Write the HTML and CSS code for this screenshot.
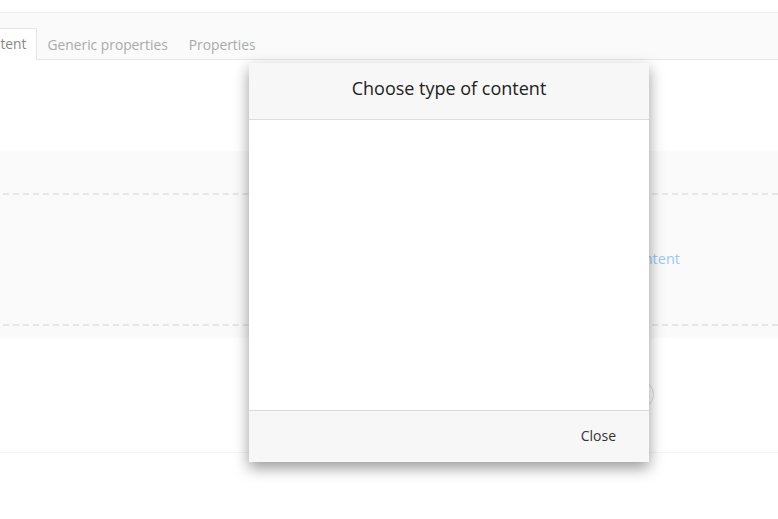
FILE: index.html
```html
<!DOCTYPE html>
<html lang="en">
  <head>
    <meta charset="utf-8" />
    <meta name="viewport" content="width=device-width, initial-scale=1" />
    <title>Content editor</title>
    <link rel="stylesheet" href="styles.css">
  </head>
  <body>
    <div class="page">
      <nav class="tabs">
        <a href="#" class="tab active">Content</a>
        <a href="#" class="tab">Generic properties</a>
        <a href="#" class="tab">Properties</a>
      </nav>

      <section class="panel">
        <div class="dropzone">
          <a href="#" class="add">Add content</a>
        </div>
      </section>

      <div class="actions">
        <span class="round"></span>
      </div>
      <div class="rule"></div>
    </div>

    <!-- modal over the editor -->
    <div class="modal">
      <header class="modal-head">
        <h2>Choose type of content</h2>
      </header>
      <div class="modal-body"></div>
      <footer class="modal-foot">
        <button class="close">Close</button>
      </footer>
    </div>
  </body>
</html>
```

FILE: styles.css
```css
* {
  box-sizing: border-box;
}
body {
  margin: 0;
  background: #fff;
  font-family: "Open Sans", sans-serif;
  color: #333;
  overflow: hidden;
}
.page {
  padding-top: 12px;
}

/* tabs */
.tabs {
  display: flex;
  align-items: flex-end;
  height: 48px;
  background: #fafafa;
  border-top: 1px solid #efefef;
  border-bottom: 1px solid #e6e6e6;
  margin-left: -36px;
}
.tab {
  display: block;
  height: 31px;
  line-height: 29px;
  padding: 0 9px 0 10px;
  font-size: 13.8px;
  color: #aaa;
  text-decoration: none;
  border: 1px solid transparent;
  border-bottom: 0;
  margin-bottom: -1px;
}
.tab.active {
  background: #fff;
  color: #888;
  border-color: #e6e6e6;
  height: 32px;
}

/* content panel */
.panel {
  margin-top: 91px;
  height: 187px;
  background: #fafafa;
  padding: 42px 0 12px 3px;
}
.dropzone {
  height: 133px;
  border-top: 2px dashed #e6e6e6;
  border-bottom: 2px dashed #e6e6e6;
  display: flex;
  align-items: center;
  justify-content: flex-end;
  padding-right: 98px;
}
.add {
  font-size: 14.5px;
  color: #9cc9f3;
  text-decoration: none;
  margin-bottom: 2px;
}

.actions {
  display: flex;
  justify-content: flex-end;
  padding: 42px 124px 0 0;
}
.round {
  display: block;
  width: 29px;
  height: 29px;
  border-radius: 50%;
  border: 1px solid #ddd;
}
.rule {
  margin-top: 43px;
  border-top: 1px solid #f5f5f5;
}

/* modal */
.modal {
  position: absolute;
  left: 249px;
  top: 63px;
  width: 400px;
  height: 399px;
  background: #fff;
  display: flex;
  flex-direction: column;
  box-shadow: 0 6px 14px rgba(0, 0, 0, 0.4);
}
.modal-head {
  height: 57px;
  background: #f7f7f7;
  border-bottom: 1px solid #dcdcdc;
  display: flex;
  align-items: center;
  justify-content: center;
  padding-bottom: 6px;
}
.modal-head h2 {
  margin: 0;
  font-size: 18px;
  font-weight: 400;
  color: #222;
}
.modal-body {
  flex: 1;
}
.modal-foot {
  height: 52px;
  background: #f7f7f7;
  border-top: 1px solid #dcdcdc;
  display: flex;
  align-items: center;
  justify-content: flex-end;
  padding: 0 23px 2px 0;
}
.close {
  background: none;
  border: 0;
  padding: 0 10px;
  font-family: inherit;
  font-size: 14px;
  color: #333;
}
```
